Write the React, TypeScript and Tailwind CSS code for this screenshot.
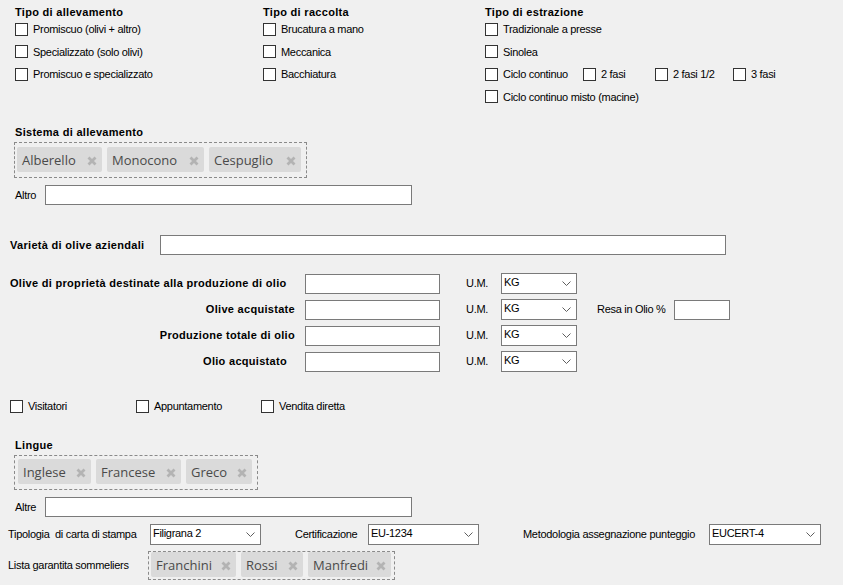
import React from 'react';
import clsx from 'clsx';

function Check({ label, className }: { label: string; className?: string }) {
  return (
    <div className={clsx('flex items-center', className)}>
      <span className="w-[13px] h-[13px] border border-[#333333] bg-white shrink-0" />
      <span className="ml-[5px] whitespace-nowrap">{label}</span>
    </div>
  );
}

function TextBox({ className }: { className?: string }) {
  return <div className={clsx('h-[20px] bg-white border border-[#7a7a7a]', className)} />;
}

function Combo({ value, className }: { value: string; className?: string }) {
  return (
    <div
      className={clsx(
        'h-[21px] bg-white border border-[#7a7a7a] flex items-center justify-between pl-[2px] pr-[5px]',
        className
      )}
    >
      <span className="pb-[2px]">{value}</span>
      <svg width="9" height="5" viewBox="0 0 9 5">
        <path d="M0.5 0.5 L4.5 4.5 L8.5 0.5" fill="none" stroke="#5f5f5f" strokeWidth="1" />
      </svg>
    </div>
  );
}

function Tag({ label, w }: { label: string; w: string }) {
  return (
    <div
      className={clsx(
        'h-[25px] bg-[#dadada] rounded-[2px] flex items-center justify-between pl-[5px] pr-[5px]',
        "font-['Open_Sans',sans-serif] text-[13px] text-[#4a4a4a] tracking-normal",
        w
      )}
    >
      <span className="pt-[3px]">{label}</span>
      <svg width="10" height="10" viewBox="0 0 10 10" className="mt-[2px]">
        <path d="M1.5 1.5 L8.5 8.5 M8.5 1.5 L1.5 8.5" stroke="#b3b3b3" strokeWidth="2.8" />
      </svg>
    </div>
  );
}

function Header({ children }: { children: React.ReactNode }) {
  return <div className="h-[12px] leading-[12px] font-bold tracking-[0.3px]">{children}</div>;
}

const oliveRows = [
  { label: 'Olive di proprietà destinate alla produzione di olio', cls: 'justify-start pl-[10px]' },
  { label: 'Olive acquistate', cls: 'justify-end pr-[10px]' },
  { label: 'Produzione totale di olio', cls: 'justify-end pr-[10px]' },
  { label: 'Olio acquistato', cls: 'justify-end pr-[18px]' },
];

export default function App() {
  return (
    <div className="w-[843px] h-[585px] overflow-hidden bg-[#f0f0f0] text-[11px] text-black font-['Liberation_Sans',Arial,sans-serif] tracking-[-0.3px]">
      {/* tipo di allevamento / raccolta / estrazione */}
      <div className="flex pt-[6px] pl-[15px]">
        <div className="w-[248px]">
          <Header>Tipo di allevamento</Header>
          <Check className="h-[22.5px]" label="Promiscuo (olivi + altro)" />
          <Check className="h-[22.5px]" label="Specializzato (solo olivi)" />
          <Check className="h-[22.5px]" label="Promiscuo e specializzato" />
        </div>
        <div className="w-[222px]">
          <Header>Tipo di raccolta</Header>
          <Check className="h-[22.5px]" label="Brucatura a mano" />
          <Check className="h-[22.5px]" label="Meccanica" />
          <Check className="h-[22.5px]" label="Bacchiatura" />
        </div>
        <div>
          <Header>Tipo di estrazione</Header>
          <Check className="h-[22.5px]" label="Tradizionale a presse" />
          <Check className="h-[22.5px]" label="Sinolea" />
          <div className="flex h-[22.5px]">
            <Check className="w-[98px]" label="Ciclo continuo" />
            <Check className="w-[72px]" label="2 fasi" />
            <Check className="w-[78px]" label="2 fasi 1/2" />
            <Check label="3 fasi" />
          </div>
          <Check className="h-[22.5px]" label="Ciclo continuo misto (macine)" />
        </div>
      </div>

      {/* sistema di allevamento */}
      <div className="mt-[18px] pl-[15px]">
        <Header>Sistema di allevamento</Header>
        <div className="mt-[4px] -ml-[1px] inline-flex gap-[5px] border border-dashed border-[#8a8a8a] pl-[2px] pr-[5px] pt-[4px] pb-[5px]">
          <Tag label="Alberello" w="w-[85px]" />
          <Tag label="Monocono" w="w-[97px]" />
          <Tag label="Cespuglio" w="w-[92px]" />
        </div>
        <div className="mt-[7px] flex items-center">
          <span className="w-[30px]">Altro</span>
          <TextBox className="w-[367px]" />
        </div>
      </div>

      {/* varietà */}
      <div className="mt-[30px] pl-[10px] flex items-center">
        <span className="w-[150px] font-bold tracking-[0.3px]">Varietà di olive aziendali</span>
        <TextBox className="w-[566px]" />
      </div>

      {/* olive / olio */}
      <div className="mt-[18px]">
        {oliveRows.map((r, i) => (
          <div key={r.label} className="flex h-[26px]">
            <div className={clsx('w-[305px] h-[21px] flex items-center font-bold tracking-[0.3px] whitespace-nowrap', r.cls)}>
              {r.label}
            </div>
            <TextBox className="mt-[1px] w-[135px]" />
            <div className="ml-[26px] w-[35px] h-[21px] flex items-center">U.M.</div>
            <Combo value="KG" className="w-[76px]" />
            {i === 1 && (
              <>
                <div className="ml-[20px] w-[77px] h-[21px] flex items-center">Resa in Olio %</div>
                <TextBox className="mt-[1px] w-[56px]" />
              </>
            )}
          </div>
        ))}
      </div>

      {/* visitatori */}
      <div className="mt-[23px] pl-[10px] flex h-[13px]">
        <Check className="w-[126px]" label="Visitatori" />
        <Check className="w-[125px]" label="Appuntamento" />
        <Check label="Vendita diretta" />
      </div>

      {/* lingue */}
      <div className="mt-[26px] pl-[15px]">
        <Header>Lingue</Header>
        <div className="mt-[4px] -ml-[1px] inline-flex gap-[5px] border border-dashed border-[#8a8a8a] pl-[3px] pr-[5px] pt-[3px] pb-[5px]">
          <Tag label="Inglese" w="w-[73px]" />
          <Tag label="Francese" w="w-[85px]" />
          <Tag label="Greco" w="w-[66px]" />
        </div>
        <div className="mt-[7px] flex items-center">
          <span className="w-[30px]">Altre</span>
          <TextBox className="w-[367px]" />
        </div>
      </div>

      {/* carta / certificazione / metodologia */}
      <div className="mt-[7px] pl-[8px] flex items-center">
        <span className="w-[142px] whitespace-pre">Tipologia  di carta di stampa</span>
        <Combo value="Filigrana 2" className="w-[111px]" />
        <span className="ml-[34px] w-[73px]">Certificazione</span>
        <Combo value="EU-1234" className="w-[111px]" />
        <span className="ml-[44px] w-[186px] whitespace-nowrap">Metodologia assegnazione punteggio</span>
        <Combo value="EUCERT-4" className="w-[112px]" />
      </div>

      {/* sommeliers */}
      <div className="mt-[6px] pl-[8px] flex items-center">
        <span className="w-[140px]">Lista garantita sommeliers</span>
        <div className="inline-flex gap-[5px] border border-dashed border-[#8a8a8a] pl-[2px] pr-[3px] pt-0 pb-[2px]">
          <Tag label="Franchini" w="w-[85px]" />
          <Tag label="Rossi" w="w-[62px]" />
          <Tag label="Manfredi" w="w-[83px]" />
        </div>
      </div>
    </div>
  );
}
